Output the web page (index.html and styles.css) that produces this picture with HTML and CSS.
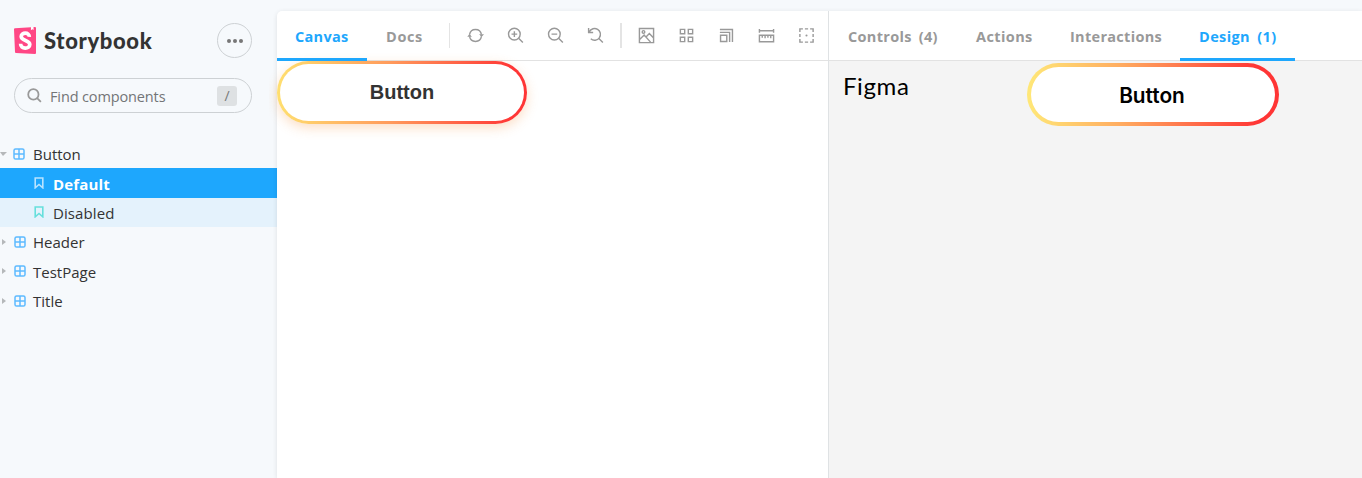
FILE: index.html
```html
<!DOCTYPE html>
<html lang="en">
<head>
<meta charset="utf-8">
<title>Storybook</title>
<link rel="stylesheet" href="styles.css">
</head>
<body>
<svg class="defs" aria-hidden="true">
  <symbol id="component" viewBox="0 0 12 12"><rect x="1" y="1" width="10" height="10" rx="1.6"/><path d="M6 1v10M1 6h10"/></symbol>
  <symbol id="bookmark" viewBox="0 0 10 12"><path d="M1.2 1h7.6v9.8L5 7.5 1.2 10.800z"/></symbol>
</svg>
<div class="app">
  <aside class="sidebar">
    <header class="brand">
      <svg class="logo" viewBox="0 0 22 27"><path fill="#ff4785" d="M0 2.200Q0 1.300 1 1.200L21 0q1 0 1 1v25q0 1-1 1L2 26.100q-1 0-1-1z"/><path fill="#fff" d="M17 0l2.500-.1.100 3.200-1.200-.9-1.500 1z"/><path fill="none" stroke="#fff" stroke-width="3.700" d="M15.300 9.900C15.500 4.800 7.200 5.100 7.200 9.500c0 4.700 8.600 3.300 8.600 8.100 0 4.800-9.300 4.800-9.200-.8"/></svg>
      <h1 class="wordmark">Storybook</h1>
      <button class="menu" aria-label="Menu"><i></i><i></i><i></i></button>
    </header>
    <div class="search">
      <svg class="search-icon" viewBox="0 0 16 16"><circle cx="6.800" cy="6.800" r="5.500"/><path d="M10.800 10.800l4 4"/></svg>
      <span class="search-text">Find components</span><kbd>/</kbd>
    </div>
    <nav class="tree">
      <a class="row open"><b class="caret"></b><svg class="comp"><use href="#component"/></svg><span>Button</span></a>
      <a class="row story selected"><svg class="mark"><use href="#bookmark"/></svg><span>Default</span></a>
      <a class="row story hovered"><svg class="mark"><use href="#bookmark"/></svg><span>Disabled</span></a>
      <a class="row"><b class="caret"></b><svg class="comp"><use href="#component"/></svg><span>Header</span></a>
      <a class="row"><b class="caret"></b><svg class="comp"><use href="#component"/></svg><span>TestPage</span></a>
      <a class="row"><b class="caret"></b><svg class="comp"><use href="#component"/></svg><span>Title</span></a>
    </nav>
  </aside>
  <main class="main">
    <section class="preview">
      <div class="bar">
        <a class="tab canvas active"><span>Canvas</span></a>
        <a class="tab docs"><span>Docs</span></a>
        <i class="sep"></i>
        <div class="tools first">
          <svg viewBox="0 0 18 18"><path d="M2.700 8A6.400 6.400 0 0 1 15.300 8M15.300 10A6.400 6.400 0 0 1 2.700 10"/><path class="solid" d="M.3 10.300l2.300-3 2.600 3zM12.800 7.700H18l-2.600 3z"/></svg>
          <svg viewBox="0 0 18 18"><circle cx="7.800" cy="7.500" r="6.200"/><path d="M12.300 12l4.500 4.500M4.800 7.500h6M7.800 4.500v6"/></svg>
          <svg viewBox="0 0 18 18"><circle cx="7.800" cy="7.500" r="6.200"/><path d="M12.300 12l4.500 4.500M4.800 7.500h6"/></svg>
          <svg viewBox="0 0 18 18"><path d="M2.500 5A6.200 6.200 0 1 1 4 12.500M12.300 12l4.500 4.500M1.700 1v4.800h4.800"/></svg>
        </div>
        <i class="sep thick"></i>
        <div class="tools">
          <svg viewBox="0 0 18 18"><path d="M1.500 1.500h15v15h-15zM2 13l4.500-4.500 6.800 7.500M8.500 10.500L12 7l4.300 4.300"/><circle cx="5.800" cy="5.200" r="1.400"/></svg>
          <svg viewBox="0 0 18 18"><path d="M2.500 2.500h4.600v4.600H2.500zM10.900 2.500h4.600v4.600h-4.600zM2.500 10.900h4.600v4.600H2.500zM10.900 10.900h4.600v4.600h-4.600z"/></svg>
          <svg viewBox="0 0 18 18"><path d="M2.700 8.700h6.600v6.600H2.700zM2 5.700h10.300V16M2 2.700h13.300V16"/></svg>
          <svg viewBox="0 0 18 18"><path d="M1.500 4h15M1.500 2v4M16.500 2v4M1.500 8.700h15v7h-15zM4.500 9v2.500M7.500 9v3M10.500 9v2.500M13.500 9v3"/></svg>
          <svg viewBox="0 0 18 18"><path d="M2 5.200V2h3.200M7.300 2h3.400M12.800 2H16v3.200M16 7.300v3.400M16 12.800V16h-3.200M10.700 16H7.300M5.200 16H2v-3.200M2 10.700V7.300"/><circle class="solid" cx="9" cy="9" r="1.100"/></svg>
        </div>
      </div>
      <div class="stage"><button class="cta shadow"><span>Button</span></button></div>
    </section>
    <section class="addons">
      <div class="bar">
        <a class="tab controls"><span>Controls (4)</span></a>
        <a class="tab actions"><span>Actions</span></a>
        <a class="tab interactions"><span>Interactions</span></a>
        <a class="tab design active"><span>Design (1)</span></a>
      </div>
      <div class="figma"><span class="figma-label">Figma</span><div class="cta mock"><span>Button</span></div></div>
    </section>
  </main>
</div>
</body>
</html>
```
FILE: styles.css
```css
* { box-sizing: border-box; }
body { margin: 0; background: #f6f9fc; color: #333; font-family: "Open Sans", "Noto Sans", sans-serif; overflow: hidden; }
button { padding: 0; margin: 0; }
svg { display: block; flex: none; fill: none; }
.defs { display: none; }
.app { display: flex; width: 1362px; height: 478px; }
.sidebar { width: 277px; flex: none; padding-top: 23px; }
.brand { display: flex; align-items: center; height: 35px; padding: 0 25px 0 14px; }
.logo { width: 22px; height: 27px; }
.wordmark { margin: 0 0 0 8px; font: 900 22px/30px Lato, sans-serif; letter-spacing: .65px; white-space: nowrap; }
.menu { display: flex; gap: 2px; align-items: center; justify-content: center; width: 35px; height: 35px; margin-left: auto; border: 1px solid #cdd1d4; border-radius: 50%; background: none; }
.menu i { width: 4px; height: 4px; border-radius: 50%; background: #777; }
.search { display: flex; align-items: center; width: 238px; height: 35px; margin: 20px 0 26px 14px; padding: 0 14px 0 12px; border: 1px solid #cdd1d4; border-radius: 18px; }
.search-icon { width: 15px; height: 15px; stroke: #999; stroke-width: 1.9; }
.search-text { margin-left: 8px; padding-top: 1px; font-size: 14.500px; letter-spacing: -.13px; color: #737577; white-space: nowrap; }
kbd { width: 20px; height: 20px; margin-left: auto; border-radius: 3px; background: #dee1e3; color: #777; font: 14px/20px "Open Sans", sans-serif; text-align: center; }
.row { display: flex; align-items: center; height: 29.400px; font-size: 15px; line-height: 20px; }
.row span { white-space: nowrap; padding-top: 1px; }
.caret { width: 0; height: 0; margin: 0 8px 0 2px; border: 3px solid transparent; border-left: 4px solid #b5b8ba; border-right: 0; }
.open .caret { margin: 0 6px 0 0; border: 4px solid transparent; border-left-width: 3px; border-top-color: #b5b8ba; border-bottom: 0; }
.comp { width: 12px; height: 12px; margin-right: 7px; stroke: #5dbaff; stroke-width: 1.500; }
.open .comp { margin-right: 8px; }
.story { padding-left: 34px; }
.mark { width: 10px; height: 12px; margin-right: 9px; stroke: #66dfdc; stroke-width: 1.600; }
.selected { background: #1ea7fd; color: #fff; font-weight: 700; letter-spacing: .15px; }
.selected .mark { stroke: #b8e3ff; }
.hovered { background: #e4f2fc; letter-spacing: .1px; }
.main { display: flex; width: 1085px; height: 467px; margin-top: 11px; background: #fff; border-radius: 5px 0 0 0; box-shadow: 0 1px 5px rgba(0, 0, 0, .1); overflow: clip; overflow-clip-margin: 8px; }
.preview { width: 551px; flex: none; }
.addons { flex: 1; border-left: 1px solid #dfe2e4; }
.bar { display: flex; height: 50px; border-bottom: 1px solid #e2e2e2; }
.tab { flex: none; height: 50px; padding: 1px 0 0 19px; border-bottom: 3px solid transparent; color: #999; font-size: 14.500px; font-weight: 700; line-height: 49px; letter-spacing: .3px; word-spacing: 3px; white-space: nowrap; }
.active { border-color: #1ea7fd; color: #1ea7fd; }
.canvas { width: 90px; padding-left: 18px; }
.docs { width: 82px; letter-spacing: .65px; }
.controls { width: 128px; }
.actions { width: 94px; letter-spacing: .4px; }
.interactions { width: 129px; }
.design { width: 115px; letter-spacing: .4px; }
.sep { flex: none; width: 1px; height: 25px; margin-top: 12px; background: #e4e4e4; }
.thick { width: 2px; margin-left: 16px; }
.tools { display: flex; align-items: center; gap: 23px; height: 49px; padding-left: 16px; }
.first { padding-left: 17px; }
.tools svg { width: 17px; height: 17px; stroke: #999; stroke-width: 1.500; }
.tools .solid { fill: #999; stroke: none; }
.cta { display: flex; align-items: center; justify-content: center; border: 3px solid transparent; border-radius: 32px; background: linear-gradient(#fff, #fff) padding-box, linear-gradient(90deg, #ffdf6f, #ff9b5c 45%, #ff3535 95%) border-box; font: 700 20px/24px "Liberation Sans", Arial, sans-serif; color: #333; }
.shadow { width: 250px; height: 63px; box-shadow: 0 4px 12px rgba(245, 150, 70, .3); }
.shadow span { padding-bottom: 2px; }
.figma { display: flex; align-items: flex-start; height: 417px; background: #f4f4f4; }
.figma-label { width: 198px; padding: 10px 0 0 14px; color: #000; font: 24px/30px Lato, sans-serif; letter-spacing: .6px; }
.mock { width: 252px; height: 63px; margin-top: 2px; border-width: 4px; background: linear-gradient(#fff, #fff) padding-box, linear-gradient(90deg, #ffe878, #ffae61 36%, #ff3535 92%) border-box; color: #000; font: 600 20.800px/24px Inter, sans-serif; }
.mock span { padding: 3px 2px 0 0; }
```
